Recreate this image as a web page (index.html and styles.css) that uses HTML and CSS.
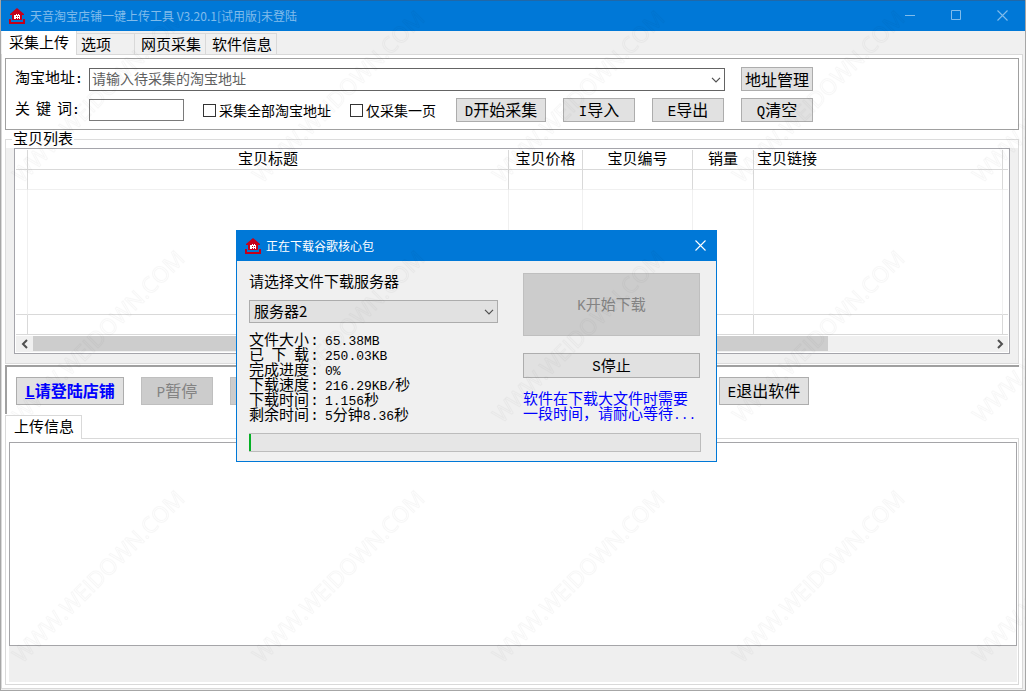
FILE: index.html
```html
<!DOCTYPE html>
<html lang="zh-CN">
<head>
<meta charset="utf-8">
<title>天音淘宝店铺一键上传工具</title>
<link rel="stylesheet" href="styles.css">
</head>
<body>
<svg class="defs" width="0" height="0" aria-hidden="true">
  <symbol id="house" viewBox="0 0 16 16">
    <path fill="#c4001a" d="M8 0 15 6V7H13V12H3V7H1V6Z"/>
    <path fill="#c4001a" d="M0 11H2V14H14V11H16V16H0Z"/>
    <path fill="#fff" d="M5 7H7V6H8V7H9V6H10V7H11V11H10V10H9V11H8V10H7V11H5Z"/>
    <path fill="#c4001a" d="M7 8H8V9H7ZM9 8H10V9H9Z"/>
  </symbol>
  <symbol id="chevron" viewBox="0 0 10 6">
    <path fill="none" stroke="#505050" stroke-width="1.2" d="M1 .8 5 4.8 9 .8"/>
  </symbol>
  <symbol id="close" viewBox="0 0 11 11">
    <path fill="none" stroke="currentColor" stroke-width="1.1" d="M.5 .5 10.500 10.500M10.500 .5 .5 10.500"/>
  </symbol>
</svg>

<main class="window">
  <header class="titlebar">
    <svg class="app-icon"><use href="#house"/></svg>
    <h1 class="title">天音淘宝店铺一键上传工具 V3.20.1[试用版]未登陆</h1>
    <div class="window-controls">
      <button class="control" type="button"><svg width="11" height="11"><path stroke="currentColor" d="M0 5.500H10"/></svg></button>
      <button class="control" type="button"><svg width="11" height="11"><path fill="none" stroke="currentColor" d="M.5 .5H9.500V9.500H.5Z"/></svg></button>
      <button class="control" type="button"><svg width="11" height="11"><use href="#close"/></svg></button>
    </div>
  </header>

  <nav class="tabs">
    <button class="tab tab-active" type="button">采集上传</button>
    <button class="tab tab-options" type="button">选项</button>
    <button class="tab" type="button">网页采集</button>
    <button class="tab" type="button">软件信息</button>
  </nav>

  <section class="page">
    <form class="search">
      <div class="search-row">
        <label class="field-label" for="address">淘宝地址<b class="latin">:</b></label>
        <div class="combo combo-address">
          <select class="select select-address" id="address"><option>请输入待采集的淘宝地址</option></select>
          <svg class="combo-arrow"><use href="#chevron"/></svg>
        </div>
        <button class="button button-medium" type="button">地址管理</button>
      </div>
      <div class="search-row">
        <label class="field-label field-label-spaced" for="keyword"><span>关</span><span>键</span><span>词<b class="latin">:</b></span></label>
        <input class="keyword" id="keyword" type="text">
        <label class="check"><input class="check-box" type="checkbox">采集全部淘宝地址</label>
        <label class="check"><input class="check-box" type="checkbox">仅采集一页</label>
        <div class="actions">
          <button class="button button-wide" type="button"><span class="latin">D</span>开始采集</button>
          <button class="button button-medium" type="button"><span class="latin">I</span>导入</button>
          <button class="button button-medium" type="button"><span class="latin">E</span>导出</button>
          <button class="button button-medium" type="button"><span class="latin">Q</span>清空</button>
        </div>
      </div>
    </form>

    <fieldset class="group">
      <legend class="group-title">宝贝列表</legend>
      <div class="group-body">
        <div class="list">
          <table class="items">
            <colgroup>
              <col class="col-mark"><col><col class="col-price"><col class="col-id"><col class="col-sales"><col class="col-link"><col class="col-end">
            </colgroup>
            <thead>
              <tr><th></th><th>宝贝标题</th><th>宝贝价格</th><th>宝贝编号</th><th>销量</th><th class="th-link">宝贝链接</th><th></th></tr>
            </thead>
            <tbody>
              <tr class="row-first"><td></td><td></td><td></td><td></td><td></td><td></td><td></td></tr>
              <tr class="row-blank"><td></td><td></td><td></td><td></td><td></td><td></td><td></td></tr>
            </tbody>
            <tfoot>
              <tr><td></td><td></td><td></td><td></td><td></td><td></td><td></td></tr>
            </tfoot>
          </table>
          <div class="scrollbar">
            <button class="scroll-button" type="button"><svg width="8" height="10"><path fill="none" stroke="#505050" stroke-width="2" d="M6 1 2 5 6 9"/></svg></button>
            <div class="scroll-track"><div class="scroll-thumb"></div></div>
            <button class="scroll-button" type="button"><svg width="8" height="10"><path fill="none" stroke="#505050" stroke-width="2" d="M2 1 6 5 2 9"/></svg></button>
          </div>
        </div>
      </div>
    </fieldset>

    <div class="toolbar">
      <button class="button button-login" type="button"><u class="latin">L</u>请登陆店铺</button>
      <button class="button button-medium" type="button" disabled><span class="latin">P</span>暂停</button>
      <button class="button button-wide" type="button" disabled></button>
      <button class="button button-wide button-exit" type="button"><span class="latin">E</span>退出软件</button>
    </div>

    <div class="log">
      <div class="log-tabs"><button class="log-tab" type="button">上传信息</button></div>
      <div class="log-page">
        <textarea class="log-text"></textarea>
        <div class="log-status"></div>
      </div>
    </div>
  </section>

  <section class="dialog" role="dialog">
    <header class="dialog-titlebar">
      <svg class="app-icon"><use href="#house"/></svg>
      <h2 class="title">正在下载谷歌核心包</h2>
      <button class="dialog-close" type="button"><svg width="11" height="11"><use href="#close"/></svg></button>
    </header>
    <div class="dialog-body">
      <div class="dialog-columns">
        <div>
          <label class="server-label" for="server">请选择文件下载服务器</label>
          <div class="combo combo-server">
            <select class="select select-server" id="server"><option>服务器2</option></select>
            <svg class="combo-arrow"><use href="#chevron"/></svg>
          </div>
          <dl class="stats">
            <div class="stat"><dt><span>文件大小</span></dt><dd><span class="latin">65.38MB</span></dd></div>
            <div class="stat"><dt><span class="spread"><i>已</i><i>下</i><i>载</i></span></dt><dd><span class="latin">250.03KB</span></dd></div>
            <div class="stat"><dt><span>完成进度</span></dt><dd><span class="latin">0%</span></dd></div>
            <div class="stat"><dt><span>下载速度</span></dt><dd><span class="latin">216.29KB/</span>秒</dd></div>
            <div class="stat"><dt><span>下载时间</span></dt><dd><span class="latin">1.156</span>秒</dd></div>
            <div class="stat"><dt><span>剩余时间</span></dt><dd><span class="latin">5</span>分钟<span class="latin">8.36</span>秒</dd></div>
          </dl>
        </div>
        <div class="dialog-actions">
          <button class="button button-start" type="button" disabled><span class="latin">K</span>开始下载</button>
          <button class="button button-stop" type="button"><span class="latin">S</span>停止</button>
          <p class="notice">软件在下载大文件时需要<br>一段时间，请耐心等待<span class="latin">...</span></p>
        </div>
      </div>
      <progress class="progress" value="0.5" max="100"></progress>
    </div>
  </section>

  <svg class="watermark" aria-hidden="true">
    <defs>
      <pattern id="mark" width="240" height="240" patternUnits="userSpaceOnUse">
        <text class="mark-text" transform="translate(21 184) rotate(-45)">WWW.WEIDOWN.COM</text>
      </pattern>
    </defs>
    <rect width="100%" height="100%" fill="url(#mark)"/>
  </svg>
</main>
</body>
</html>
```
FILE: styles.css
```css
* {
  box-sizing: border-box;
}

body {
  margin: 0;
  background: #f0f0f0;
  color: #000;
  font: 15px/18px "Noto Sans CJK SC", sans-serif;
}

button, input, select, textarea {
  margin: 0;
  padding: 0;
  border-radius: 0;
  color: inherit;
  font: inherit;
}

svg {
  display: block;
}

.defs {
  position: absolute;
}

.latin {
  font-family: "Liberation Mono", monospace;
  font-size: 13px;
}

/* Main window */
.window {
  position: relative;
  display: flex;
  flex-direction: column;
  min-height: 100vh;
  overflow: hidden;
  border: 1px solid #a6a6a6;
  border-top: 0;
  background: #f0f0f0;
}

.titlebar {
  display: flex;
  align-items: center;
  height: 31px;
  margin: 0 -1px;
  padding-left: 9px;
  border-top: 1px solid #2168a8;
  background: #0078d7;
  color: #80bceb;
}

.app-icon {
  width: 16px;
  height: 16px;
}

.title {
  margin: 0 0 0 5px;
  padding-bottom: 1px;
  font-size: 12px;
  font-weight: 400;
}

.window-controls {
  display: flex;
  margin-left: auto;
  padding-right: 1px;
}

.control {
  display: grid;
  place-items: center;
  width: 46px;
  height: 30px;
  padding-bottom: 2px;
  border: 0;
  background: none;
}

.tabs {
  display: flex;
  align-items: flex-end;
  height: 23px;
  padding-left: 1px;
}

.tab {
  height: 21px;
  padding: 0 4px 1px 6px;
  border: 1px solid #d9d9d9;
  border-width: 1px 1px 0 0;
  background: #f0f0f0;
}

.tab-active {
  position: relative;
  z-index: 1;
  height: 24px;
  margin-bottom: -1px;
  padding: 0 7px 2px;
  border-top: 0;
  background: #fff;
}

.tab-options {
  width: 58px;
  padding-left: 4px;
  text-align: left;
}

.page {
  display: flex;
  flex: 1;
  flex-direction: column;
  margin: 0 2px 1px 0;
  padding: 3px;
  border: 1px solid #d9d9d9;
  background: #fff;
}

/* Search form */
.search {
  display: flex;
  flex-direction: column;
  gap: 7px;
  padding: 8px 9px 7px;
  border: 1px solid #a0a0a0;
}

.search-row {
  display: flex;
  align-items: center;
  height: 24px;
}

.field-label {
  width: 74px;
  padding-bottom: 1px;
}

.field-label-spaced {
  display: flex;
  gap: 6px;
}

.combo {
  position: relative;
}

.combo-address {
  width: 636px;
  margin-right: 16px;
}

.select {
  display: block;
  width: 100%;
  height: 23px;
  padding-bottom: 2px;
  border: 1px solid #acacac;
  appearance: none;
}

.select-address {
  padding-left: 2px;
  border-color: #646464;
  background: #fff;
  color: #606060;
  font-size: 14px;
}

.select-server {
  padding-left: 4px;
  background: #e1e1e1;
}

.combo-arrow {
  position: absolute;
  top: 9px;
  right: 4px;
  width: 10px;
  height: 6px;
  pointer-events: none;
}

.keyword {
  width: 95px;
  height: 22px;
  border: 1px solid #7a7a7a;
  background: #fff;
}

.check {
  display: flex;
  align-items: center;
  gap: 3px;
  margin-left: 19px;
  font-size: 14px;
}

.check-box {
  width: 13px;
  height: 13px;
  border: 1px solid #333;
  background: #fff;
  appearance: none;
}

.actions {
  display: flex;
  gap: 17px;
  margin-left: 20px;
}

.button {
  height: 24px;
  border: 1px solid #adadad;
  background: #e1e1e1;
  font-size: 16px;
  white-space: nowrap;
}

.button:disabled {
  border-color: #bfbfbf;
  background: #ccc;
  color: #838383;
}

.button .latin {
  font-size: 14px;
}

.button-medium {
  width: 72px;
}

.button-wide {
  width: 90px;
}

/* Item list */
.group {
  min-width: 0;
  margin: 0;
  padding: 0;
  border: 1px solid #dcdcdc;
}

.group-title {
  height: 18px;
  margin-left: 6px;
  padding: 0 1px;
  line-height: 16px;
}

.group-body {
  padding: 0 8px 9px;
  background: #f0f0f0;
}

.list {
  padding: 1px;
  border: 1px solid #a5a5ab;
  background: #fff;
}

.items {
  width: 100%;
  border-spacing: 0;
  table-layout: fixed;
}

.items th,
.items td {
  height: 20px;
  padding: 0;
  border: 1px solid #d9d9d9;
  border-width: 0 1px 1px 0;
  font-weight: 400;
  line-height: 18px;
}

.items th {
  padding-bottom: 3px;
  line-height: 16px;
}

.items th:last-child,
.items td:last-child {
  border-right: 0;
}

.items .row-first td {
  border-bottom-color: #f0f0f0;
}

.items .row-blank td {
  height: 125px;
  border-right-color: #f0f0f0;
}

.items .th-link {
  padding-left: 3px;
  text-align: left;
}

.col-mark {
  width: 12px;
}

.col-price {
  width: 74px;
}

.col-id {
  width: 110px;
}

.col-sales {
  width: 61px;
}

.col-link {
  width: 249px;
}

.col-end {
  width: 5px;
}

.scrollbar {
  display: flex;
  height: 16px;
  margin-top: 1px;
  background: #f0f0f0;
}

.scroll-button {
  display: grid;
  place-items: center;
  width: 17px;
  border: 0;
  background: none;
}

.scroll-track {
  flex: 1;
}

.scroll-thumb {
  width: 83%;
  height: 15px;
  background: #cdcdcd;
}

/* Toolbar */
.toolbar {
  display: flex;
  height: 49px;
  margin-top: 1px;
  padding: 10px 0 0 9px;
  border: solid #a0a0a0;
  border-width: 2px 0 0 2px;
}

.toolbar .button {
  height: 28px;
  margin-right: 17px;
}

.toolbar .button-login {
  width: 108px;
  color: #00f;
  font-weight: 700;
}

.button-login .latin {
  font-size: 16px;
}

.toolbar .button-exit {
  margin-left: 382px;
}

/* Upload log */
.log {
  display: flex;
  flex: 1;
  flex-direction: column;
  margin-top: 1px;
}

.log-tabs {
  display: flex;
  height: 23px;
}

.log-tab {
  z-index: 1;
  height: 24px;
  padding: 0 7px 3px 8px;
  border: 1px solid #d9d9d9;
  border-bottom: 0;
  background: #fff;
}

.log-page {
  display: flex;
  flex: 1;
  flex-direction: column;
  padding: 3px 1px 2px 3px;
  border: 1px solid #d9d9d9;
}

.log-text {
  flex: 1;
  border: 1px solid #a5a5a8;
  background: #fff;
  resize: none;
}

.log-status {
  height: 36px;
  background: #efefef;
}

/* Download dialog */
.dialog {
  position: absolute;
  top: 230px;
  left: 235px;
  width: 481px;
  border: 1px solid #0078d7;
  background: #f0f0f0;
}

.dialog-titlebar {
  display: flex;
  align-items: center;
  height: 30px;
  padding-left: 8px;
  background: #0078d7;
  color: #fff;
}

.dialog-close {
  display: grid;
  place-items: center;
  width: 31px;
  height: 30px;
  margin-left: auto;
  padding-bottom: 2px;
  border: 0;
  background: none;
}

.dialog-body {
  padding: 12px 15px 9px 12px;
}

.dialog-columns {
  display: grid;
  grid-template-columns: 1fr 177px;
  gap: 25px;
  padding-right: 1px;
}

.server-label {
  display: block;
  height: 27px;
  line-height: 16px;
}

.stats,
.notice {
  font-family: "Liberation Mono", "Noto Sans CJK SC", monospace;
  line-height: 15px;
}

.stats {
  margin: 11px 0 0;
}

.stat {
  display: flex;
  height: 15px;
}

.stat dt {
  display: flex;
  width: 76px;
}

.stat dt::after {
  content: ":";
  padding-left: 1px;
}

.stat dd {
  margin: 0;
}

.spread {
  display: flex;
  justify-content: space-between;
  width: 60px;
}

.spread i {
  font-style: normal;
}

.dialog-actions {
  display: flex;
  flex-direction: column;
}

.dialog-actions .button {
  font-size: 15px;
}

.dialog-actions .button-start {
  height: 63px;
  margin-bottom: 17px;
}

.dialog-actions .button-stop {
  height: 25px;
}

.notice {
  margin: 15px 0 0;
  color: #00f;
  white-space: nowrap;
}

.progress {
  display: block;
  width: 100%;
  height: 19px;
  margin-top: 9px;
  border: 1px solid #bcbcbc;
  border-left: 0;
  appearance: none;
}

.progress::-webkit-progress-bar {
  background: #e6e6e6;
}

.progress::-webkit-progress-value {
  background: #06b025;
}

/* Repeating diagonal mark */
.watermark {
  position: absolute;
  inset: 0;
  width: 100%;
  height: 100%;
  pointer-events: none;
}

.mark-text {
  fill: none;
  stroke: #000;
  stroke-opacity: 0.03;
  font: 22px "Open Sans", sans-serif;
}
```
